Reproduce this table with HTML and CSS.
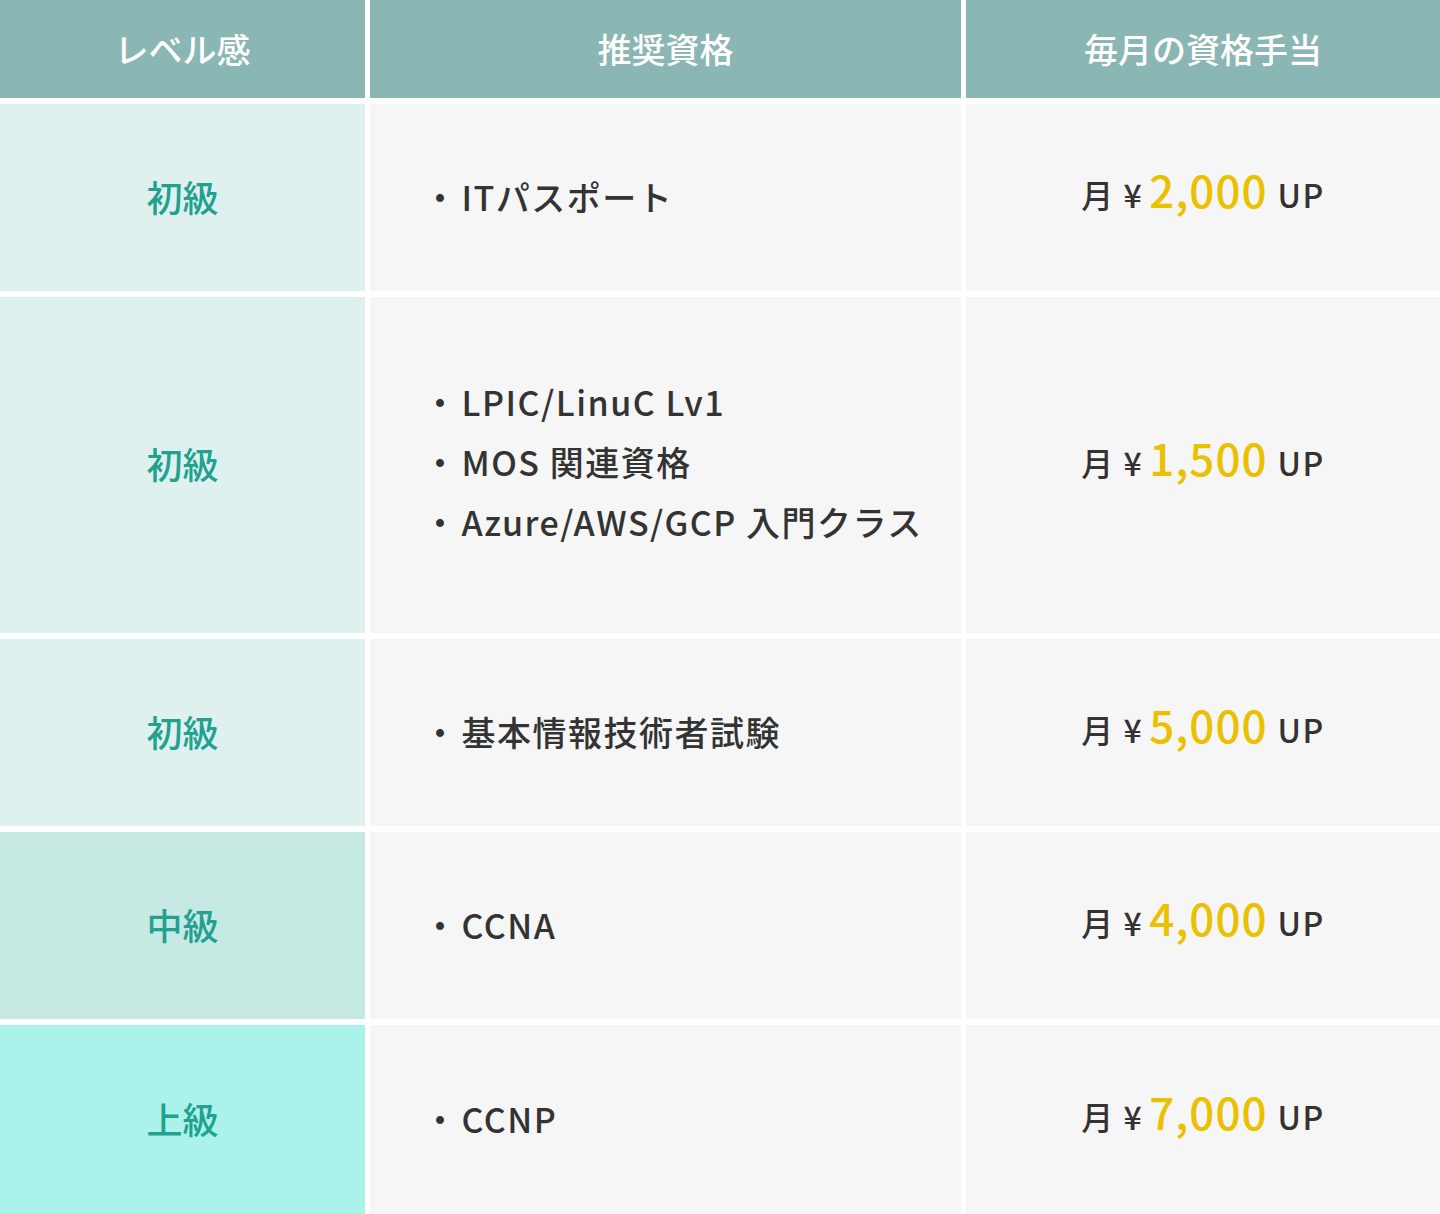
FILE: index.html
```html
<!DOCTYPE html>
<html lang="ja">
<head>
<meta charset="utf-8">
<title>資格手当</title>
<link rel="stylesheet" href="styles.css">
</head>
<body>
<div class="table">
  <div class="th">レベル感</div>
  <div class="th">推奨資格</div>
  <div class="th">毎月の資格手当</div>

  <div class="level lv-basic">初級</div>
  <div class="cert"><ul><li>ITパスポート</li></ul></div>
  <div class="pay">月 ¥<span class="amt">2,000</span>UP</div>

  <div class="level lv-basic">初級</div>
  <div class="cert cert-multi"><ul><li>LPIC/LinuC Lv1</li><li>MOS 関連資格</li><li>Azure/AWS/GCP 入門クラス</li></ul></div>
  <div class="pay">月 ¥<span class="amt">1,500</span>UP</div>

  <div class="level lv-basic">初級</div>
  <div class="cert"><ul><li>基本情報技術者試験</li></ul></div>
  <div class="pay">月 ¥<span class="amt">5,000</span>UP</div>

  <div class="level lv-mid">中級</div>
  <div class="cert"><ul><li>CCNA</li></ul></div>
  <div class="pay">月 ¥<span class="amt">4,000</span>UP</div>

  <div class="level lv-adv">上級</div>
  <div class="cert"><ul><li>CCNP</li></ul></div>
  <div class="pay">月 ¥<span class="amt">7,000</span>UP</div>
</div>
</body>
</html>
```

FILE: styles.css
```css
html, body {
  margin: 0;
  padding: 0;
  background: #ffffff;
}
body {
  font-family: "Noto Sans CJK JP", "Noto Sans", sans-serif;
  color: #333333;
  font-weight: 500;
}
.table {
  display: grid;
  grid-template-columns: 365px 591px 474px;
  grid-template-rows: 98px 187px 336px 187px 187px 189px;
  column-gap: 5px;
  row-gap: 6px;
  width: 1440px;
}
.th {
  background: #8ab6b3;
  color: #ffffff;
  font-size: 34px;
  display: flex;
  align-items: center;
  justify-content: center;
  line-height: 1;
}
.level {
  display: flex;
  align-items: center;
  justify-content: center;
  font-size: 36px;
  color: #22a191;
  line-height: 1;
  padding-bottom: 4px;
}
.lv-basic { background: #dff1ef; }
.lv-mid { background: #c6e9e4; }
.lv-adv { background: #abf3ea; }
.cert {
  background: #f6f6f6;
  display: flex;
  align-items: center;
  padding-left: 53px;
  padding-bottom: 1px;
}
.cert-multi {
  padding-bottom: 6px;
}
.cert ul {
  list-style: none;
  margin: 0;
  padding: 0;
  font-size: 34px;
  letter-spacing: 1.5px;
  line-height: 60px;
}
.cert li::before {
  content: "・";
  margin-right: 3px;
}
.pay {
  background: #f6f6f6;
  display: flex;
  align-items: baseline;
  justify-content: center;
  align-content: center;
  flex-wrap: wrap;
  font-size: 32px;
  letter-spacing: 1.5px;
  line-height: 1;
  padding-bottom: 17px;
}
.amt {
  color: #ebc000;
  font-size: 44px;
  letter-spacing: 1px;
  margin: 0 10px 0 6px;
}
```
